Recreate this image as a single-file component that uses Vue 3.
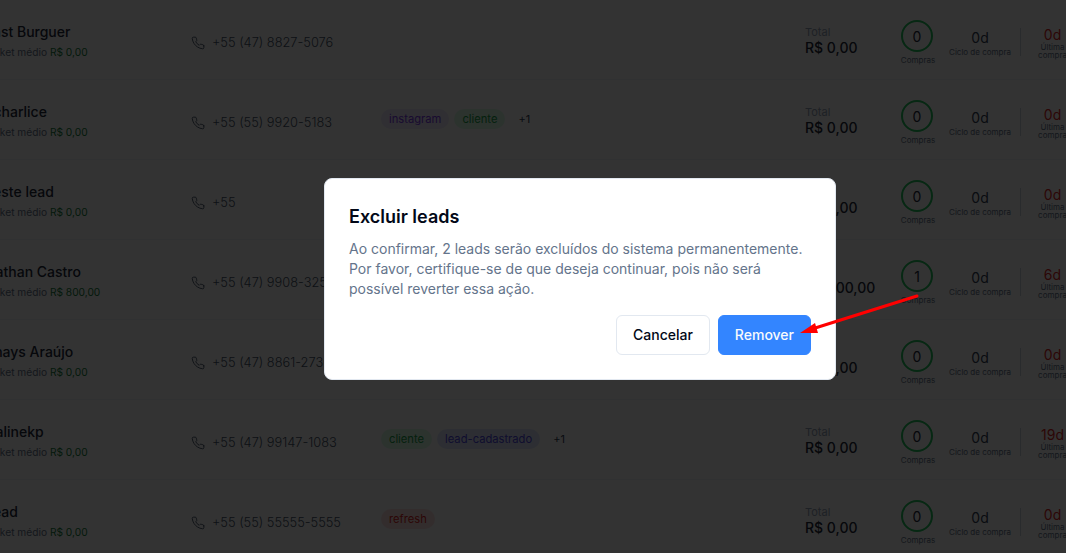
<template>
  <div class="page">
    <ul class="lead-list">
      <li v-for="lead in leads" :key="lead.name" class="lead-row">
        <div class="lead-name">
          <strong>{{ lead.name }}</strong>
          <span>Ticket médio <b>{{ lead.ticket }}</b></span>
        </div>
        <div class="lead-phone">
          <svg viewBox="0 0 24 24" width="14" height="14" fill="none" stroke="currentColor" stroke-width="1.6" stroke-linecap="round" stroke-linejoin="round">
            <path d="M22 16.92v3a2 2 0 0 1-2.18 2 19.79 19.79 0 0 1-8.63-3.07 19.5 19.5 0 0 1-6-6 19.79 19.79 0 0 1-3.07-8.67A2 2 0 0 1 4.11 2h3a2 2 0 0 1 2 1.72 12.84 12.84 0 0 0 .7 2.81 2 2 0 0 1-.45 2.11L8.09 9.91a16 16 0 0 0 6 6l1.27-1.27a2 2 0 0 1 2.11-.45 12.84 12.84 0 0 0 2.81.7A2 2 0 0 1 22 16.92z" />
          </svg>
          <span>{{ lead.phone }}</span>
        </div>
        <div class="lead-tags">
          <span v-for="tag in lead.tags" :key="tag.label" :class="['tag', tag.color]">{{ tag.label }}</span>
          <span v-if="lead.more" class="tag-more">{{ lead.more }}</span>
        </div>
        <div class="lead-total">
          <small>Total</small>
          <span>{{ lead.total }}</span>
        </div>
        <div class="lead-purchases">
          <div class="ring">{{ lead.purchases }}</div>
          <small>Compras</small>
        </div>
        <div class="lead-cycle">
          <span>0d</span>
          <small>Ciclo de compra</small>
        </div>
        <div class="lead-last">
          <span>{{ lead.last }}</span>
          <small>Última<br />compra</small>
        </div>
      </li>
    </ul>

    <div class="overlay">
      <div class="dialog">
        <h2>Excluir leads</h2>
        <p>Ao confirmar, 2 leads serão excluídos do sistema permanentemente. Por favor, certifique-se de que deseja continuar, pois não será possível reverter essa ação.</p>
        <div class="dialog-actions">
          <button class="btn-cancel">Cancelar</button>
          <button class="btn-remove">Remover</button>
        </div>
      </div>
    </div>

    <svg class="arrow" viewBox="0 0 1066 553" width="1066" height="553">
      <line x1="917" y1="296" x2="812" y2="329" stroke="#ff0000" stroke-width="3" stroke-linecap="round" />
      <polygon points="800,333 815,323 818,333" fill="#ff0000" />
    </svg>
  </div>
</template>

<script setup>
const leads = [
  { name: 'Fast Burguer', ticket: 'R$ 0,00', phone: '+55 (47) 8827-5076', tags: [], total: 'R$ 0,00', purchases: 0, last: '0d' },
  {
    name: 'Echarlice',
    ticket: 'R$ 0,00',
    phone: '+55 (55) 9920-5183',
    tags: [
      { label: 'instagram', color: 'purple' },
      { label: 'cliente', color: 'green' }
    ],
    more: '+1',
    total: 'R$ 0,00',
    purchases: 0,
    last: '0d'
  },
  { name: 'Teste lead', ticket: 'R$ 0,00', phone: '+55', tags: [], total: 'R$ 0,00', purchases: 0, last: '0d' },
  { name: 'Nathan Castro', ticket: 'R$ 800,00', phone: '+55 (47) 9908-3257', tags: [], total: 'R$ 800,00', purchases: 1, last: '6d' },
  { name: 'Thays Araújo', ticket: 'R$ 0,00', phone: '+55 (47) 8861-2730', tags: [], total: 'R$ 0,00', purchases: 0, last: '0d' },
  {
    name: 'Nalinekp',
    ticket: 'R$ 0,00',
    phone: '+55 (47) 99147-1083',
    tags: [
      { label: 'cliente', color: 'green' },
      { label: 'lead-cadastrado', color: 'indigo' }
    ],
    more: '+1',
    total: 'R$ 0,00',
    purchases: 0,
    last: '19d'
  },
  {
    name: 'Lead',
    ticket: 'R$ 0,00',
    phone: '+55 (55) 55555-5555',
    tags: [{ label: 'refresh', color: 'red' }],
    total: 'R$ 0,00',
    purchases: 0,
    last: '0d'
  }
]
</script>

<style>
html,
body {
  margin: 0;
  overflow: hidden;
  background: #fff;
}
</style>

<style scoped>
.page {
  position: relative;
  width: 1066px;
  height: 553px;
  overflow: hidden;
  font-family: Inter, "Liberation Sans", sans-serif;
  color: #0f172a;
}

.lead-list {
  list-style: none;
  margin: 0 0 0 -15px;
  padding: 0;
  width: 1120px;
}

.lead-row {
  display: flex;
  align-items: stretch;
  height: 80px;
  box-sizing: border-box;
  border-bottom: 1px solid #f1f5f9;
}

.lead-name {
  width: 206px;
  padding-top: 23px;
  display: flex;
  flex-direction: column;
  gap: 4px;
}

.lead-name strong {
  font-size: 14px;
  line-height: 18px;
  font-weight: 500;
  color: #1e293b;
}

.lead-name span {
  font-size: 10.2px;
  line-height: 14px;
  color: #64748b;
}

.lead-name b {
  font-weight: 400;
  color: #15803d;
}

.lead-phone {
  width: 190px;
  display: flex;
  align-items: center;
  gap: 7px;
  font-size: 12.8px;
  font-weight: 300;
  color: #475569;
  padding-top: 6px;
  box-sizing: border-box;
}

.lead-tags {
  width: 424px;
  display: flex;
  align-items: center;
  gap: 5px;
  padding-bottom: 2px;
  box-sizing: border-box;
}

.tag {
  font-size: 11.2px;
  line-height: 20px;
  padding: 0 8px;
  border-radius: 10px;
}

.tag.green {
  background: #dcfce7;
  color: #16a34a;
}

.tag.indigo {
  background: #e0e7ff;
  color: #4f46e5;
}

.tag.purple {
  background: #ede9fe;
  color: #7c3aed;
}

.tag.red {
  background: #fee2e2;
  color: #dc2626;
}

.tag-more {
  font-size: 11px;
  padding-left: 8px;
  color: #334155;
}

.lead-total {
  width: 96px;
  padding-top: 25px;
  display: flex;
  flex-direction: column;
}

.lead-total small {
  font-size: 11px;
  line-height: 14px;
  color: #94a3b8;
}

.lead-total span {
  font-size: 14px;
  line-height: 18px;
  font-weight: 500;
  color: #1e293b;
}

.lead-purchases {
  width: 34px;
  padding-top: 20px;
  display: flex;
  flex-direction: column;
  align-items: center;
}

.ring {
  width: 32px;
  height: 32px;
  margin-right: 2px;
  box-sizing: border-box;
  border: 2px solid #22c55e;
  border-radius: 50%;
  display: flex;
  align-items: center;
  justify-content: center;
  font-size: 14px;
  color: #1e293b;
}

.lead-purchases small {
  margin-top: 3px;
  font-size: 8px;
  line-height: 10px;
  color: #64748b;
}

.lead-cycle {
  width: 90px;
  padding-top: 29px;
  display: flex;
  flex-direction: column;
  align-items: center;
  box-sizing: border-box;
}

.lead-cycle span {
  font-size: 14px;
  line-height: 18px;
  color: #334155;
}

.lead-cycle small {
  font-size: 8px;
  line-height: 10px;
  color: #64748b;
}

.lead-last {
  width: 64px;
  margin-top: 28px;
  margin-left: -5px;
  height: 28px;
  border-left: 1px solid #cbd5e1;
  display: flex;
  flex-direction: column;
  align-items: center;
  box-sizing: border-box;
}

.lead-last span {
  font-size: 14px;
  line-height: 13px;
  color: #dc2626;
}

.lead-last small {
  margin-top: 2px;
  font-size: 8px;
  line-height: 8px;
  text-align: center;
  color: #64748b;
}

.overlay {
  position: absolute;
  inset: 0;
  background: rgba(0, 0, 0, 0.8);
  display: flex;
  align-items: flex-start;
  padding: 178px 0 0 324px;
  box-sizing: border-box;
}

.dialog {
  width: 512px;
  height: 202px;
  box-sizing: border-box;
  background: #fff;
  border: 1px solid #e2e8f0;
  border-radius: 8px;
  padding: 24px;
  display: flex;
  flex-direction: column;
}

.dialog h2 {
  margin: 0;
  font-size: 18px;
  line-height: 28px;
  font-weight: 600;
  color: #020817;
}

.dialog p {
  margin: 8px 0 0;
  font-size: 14px;
  line-height: 20px;
  color: #64748b;
}

.dialog-actions {
  margin-top: 16px;
  display: flex;
  justify-content: flex-end;
  gap: 8px;
}

.dialog-actions button {
  height: 40px;
  padding: 0 16px 1px;
  border-radius: 6px;
  font-family: inherit;
  font-size: 14px;
  font-weight: 500;
  cursor: pointer;
}

.btn-cancel {
  background: #fff;
  border: 1px solid #e2e8f0;
  color: #020817;
}

.btn-remove {
  background: #3385ff;
  border: 1px solid #3385ff;
  color: #f8fafc;
}

.arrow {
  position: absolute;
  top: 0;
  left: 0;
  pointer-events: none;
}
</style>
